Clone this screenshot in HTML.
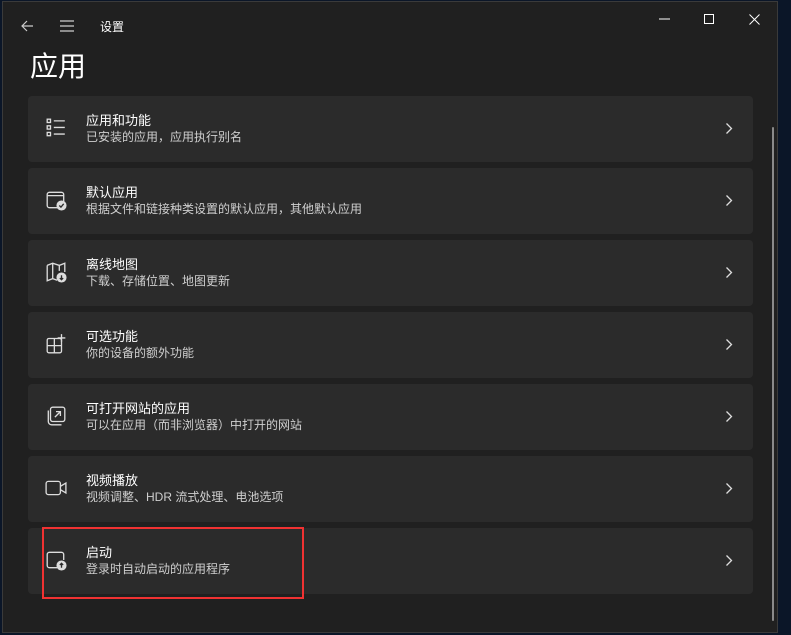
<!DOCTYPE html>
<html><head><meta charset="utf-8"><style>
*{margin:0;padding:0;box-sizing:border-box}
body{width:791px;height:635px;background:#0b1628;position:relative;overflow:hidden;font-family:"Liberation Sans","Microsoft YaHei","Noto Sans CJK SC",sans-serif;color:#fff}
.win{position:absolute;left:2px;top:1px;width:776px;height:632px;background:#202020;border:1px solid #3a3a3a}
.t{position:absolute;font-size:12px;color:#fff}
.card{position:absolute;left:25px;width:725px;height:66px;background:#2b2b2b;border-radius:4px}
.card .h{position:absolute;left:58px;top:14px;font-size:13px;color:#fff}
.card .s{position:absolute;left:58px;top:32px;font-size:12px;color:#cfcfcf}
.card svg.i{position:absolute;left:17px;top:21px}
.card .c{position:absolute;right:20px;top:26px}
</style></head><body>
<div class="win">
<svg style="position:absolute;left:17px;top:17px" width="14" height="14" viewBox="0 0 14 14" fill="none" stroke="#ccc" stroke-width="1.2"><path d="M13 7H2M7 2L2 7l5 5"/></svg>
<svg style="position:absolute;left:56px;top:18px" width="16" height="12" viewBox="0 0 16 12" stroke="#ccc" stroke-width="1.2"><path d="M1 1h14M1 6h14M1 11h14"/></svg>
<div class="t" style="left:97px;top:16px">设置</div>
<svg style="position:absolute;left:656px;top:16px" width="12" height="2"><path d="M0 1h11" stroke="#fff"/></svg>
<svg style="position:absolute;left:701px;top:12px" width="11" height="11"><rect x="0.5" y="0.5" width="9" height="9" fill="none" stroke="#fff"/></svg>
<svg style="position:absolute;left:746px;top:12px" width="11" height="11"><path d="M0.5 0.5l10 10M10.5 0.5l-10 10" stroke="#fff"/></svg>
<div style="position:absolute;left:27px;top:43px;font-size:28px;color:#fff">应用</div>

<div class="card" style="top:94px"><svg class="i" width="22" height="22" viewBox="0 0 20 20" fill="none" stroke="#ddd" stroke-width="1.2"><rect x="2" y="2" width="3" height="3"/><rect x="2" y="8" width="3" height="3"/><rect x="2" y="14" width="3" height="3"/><path d="M8 3.5h10M8 9.5h10M8 15.5h10"/></svg><div class="h">应用和功能</div><div class="s">已安装的应用，应用执行别名</div><svg class="c" width="8" height="13" viewBox="0 0 8 13"><path d="M1.5 1.5l5 5-5 5" fill="none" stroke="#ddd" stroke-width="1.3"/></svg></div>

<div class="card" style="top:166px"><svg class="i" width="22" height="22" viewBox="0 0 20 20" fill="none" stroke="#ddd" stroke-width="1.2"><rect x="2" y="3" width="15" height="14" rx="2"/><path d="M2 6h15"/><circle cx="15" cy="15" r="4" fill="#ddd"/><path d="M13 15l1.5 1.5 2.5-3" stroke="#2b2b2b"/></svg><div class="h">默认应用</div><div class="s">根据文件和链接种类设置的默认应用，其他默认应用</div><svg class="c" width="8" height="13" viewBox="0 0 8 13"><path d="M1.5 1.5l5 5-5 5" fill="none" stroke="#ddd" stroke-width="1.3"/></svg></div>

<div class="card" style="top:238px"><svg class="i" width="22" height="22" viewBox="0 0 20 20" fill="none" stroke="#ddd" stroke-width="1.2"><path d="M2 4l5-2 6 2 5-2v8M2 4v14l5-2 4 1.5M7 2v14M13 4v5"/><circle cx="15" cy="15" r="4" fill="#ddd"/><path d="M15 13v4M13.5 15.5L15 17l1.5-1.5" stroke="#2b2b2b"/></svg><div class="h">离线地图</div><div class="s">下载、存储位置、地图更新</div><svg class="c" width="8" height="13" viewBox="0 0 8 13"><path d="M1.5 1.5l5 5-5 5" fill="none" stroke="#ddd" stroke-width="1.3"/></svg></div>

<div class="card" style="top:310px"><svg class="i" width="22" height="22" viewBox="0 0 20 20" fill="none" stroke="#ddd" stroke-width="1.2"><rect x="2" y="5" width="13" height="13" rx="1.5"/><path d="M8.5 5v13M2 11.5h13M15 1v7M11.5 4.5h7"/></svg><div class="h">可选功能</div><div class="s">你的设备的额外功能</div><svg class="c" width="8" height="13" viewBox="0 0 8 13"><path d="M1.5 1.5l5 5-5 5" fill="none" stroke="#ddd" stroke-width="1.3"/></svg></div>

<div class="card" style="top:382px"><svg class="i" width="22" height="22" viewBox="0 0 20 20" fill="none" stroke="#ddd" stroke-width="1.2"><rect x="5" y="2" width="13" height="13" rx="2"/><path d="M3 5v10a3 3 0 0 0 3 3h9M9 11l5-5M10 6h4v4"/></svg><div class="h">可打开网站的应用</div><div class="s">可以在应用（而非浏览器）中打开的网站</div><svg class="c" width="8" height="13" viewBox="0 0 8 13"><path d="M1.5 1.5l5 5-5 5" fill="none" stroke="#ddd" stroke-width="1.3"/></svg></div>

<div class="card" style="top:454px"><svg class="i" width="22" height="22" viewBox="0 0 20 20" fill="none" stroke="#ddd" stroke-width="1.2"><rect x="1" y="4" width="13" height="12" rx="2"/><path d="M14 8.5l5-3v9l-5-3"/></svg><div class="h">视频播放</div><div class="s">视频调整、HDR 流式处理、电池选项</div><svg class="c" width="8" height="13" viewBox="0 0 8 13"><path d="M1.5 1.5l5 5-5 5" fill="none" stroke="#ddd" stroke-width="1.3"/></svg></div>

<div class="card" style="top:526px"><svg class="i" width="22" height="22" viewBox="0 0 20 20" fill="none" stroke="#ddd" stroke-width="1.2"><path d="M11 17H4a2 2 0 0 1-2-2V5a2 2 0 0 1 2-2h11a2 2 0 0 1 2 2v5"/><circle cx="15" cy="15" r="4" fill="#ddd"/><path d="M15 17v-4M13.5 14.5L15 13l1.5 1.5" stroke="#2b2b2b"/></svg><div class="h">启动</div><div class="s">登录时自动启动的应用程序</div><svg class="c" width="8" height="13" viewBox="0 0 8 13"><path d="M1.5 1.5l5 5-5 5" fill="none" stroke="#ddd" stroke-width="1.3"/></svg></div>

<div style="position:absolute;left:769px;top:125px;width:2px;height:494px;background:#8a8a8a;border-radius:1px"></div>
</div>
<div style="position:absolute;left:42px;top:527px;width:262px;height:72px;border:2px solid #f03232"></div>
</body></html>
